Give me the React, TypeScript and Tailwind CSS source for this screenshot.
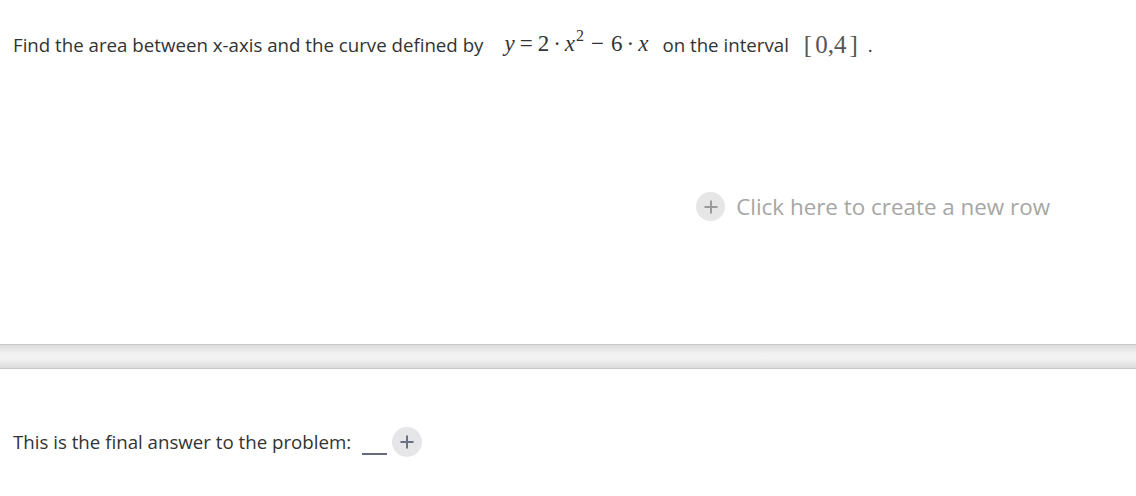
import React from "react";

function PlusCircle({ className, stroke }: { className: string; stroke: string }) {
  return (
    <span className={`inline-flex items-center justify-center rounded-full ${className}`}>
      <svg width="16" height="16" viewBox="0 0 16 16" fill="none">
        <path d="M8 1.5v13M1.5 8h13" stroke={stroke} strokeWidth="2" />
      </svg>
    </span>
  );
}

function Equation() {
  return (
    <span className="font-['Liberation_Serif',serif] text-[23px] text-[#333] whitespace-nowrap">
      <i>y</i>
      <span className="mx-[5px]">=</span>
      2<span className="mx-[4px]">·</span>
      <i>x</i>
      <span className="text-[16px] relative -top-[10px] ml-[1px]">2</span>
      <span className="mx-[7px]">−</span>
      6<span className="mx-[4px]">·</span>
      <i>x</i>
    </span>
  );
}

export default function App() {
  return (
    <div className="w-[1136px] h-[496px] bg-white font-['Open_Sans',sans-serif] text-[#333] overflow-hidden">
      <section className="h-[344px] flex flex-col">
        <p className="pl-[13px] pt-[28px] text-[18.7px] leading-[32px] flex items-center whitespace-nowrap">
          <span>Find the area between x-axis and the curve defined by</span>
          <span className="ml-[21px]">
            <Equation />
          </span>
          <span className="ml-[14px]">on the interval</span>
          <span className="ml-[15px] font-['Liberation_Serif',serif] text-[25px] text-[#555]">
            [<span className="mx-[3px]">0,4</span>]
          </span>
          <span className="ml-[10px]">.</span>
        </p>

        <div className="mt-[128px] flex justify-end pr-[86px]">
          <button className="flex items-center gap-[11px] text-[22.4px] text-[#a6a6a6]">
            <PlusCircle className="w-[29px] h-[29px] bg-[#e6e6e6]" stroke="#9a9a9a" />
            <span>Click here to create a new row</span>
          </button>
        </div>
      </section>

      <div className="h-[25px] border-y border-[#c8c8c8] bg-[linear-gradient(to_bottom,#dcdcdc,#f2f2f2_40%,#f2f2f2_60%,#dcdcdc)]" />

      <section className="pl-[13px] pt-[58px] flex items-center">
        <span className="text-[18.7px]">This is the final answer to the problem:</span>
        <span className="ml-[11px] mt-[24px] w-[25px] h-[2px] bg-[#666a7a]" />
        <PlusCircle className="ml-[5px] w-[30px] h-[30px] bg-[#e6e6e9]" stroke="#6a6f82" />
      </section>
    </div>
  );
}
